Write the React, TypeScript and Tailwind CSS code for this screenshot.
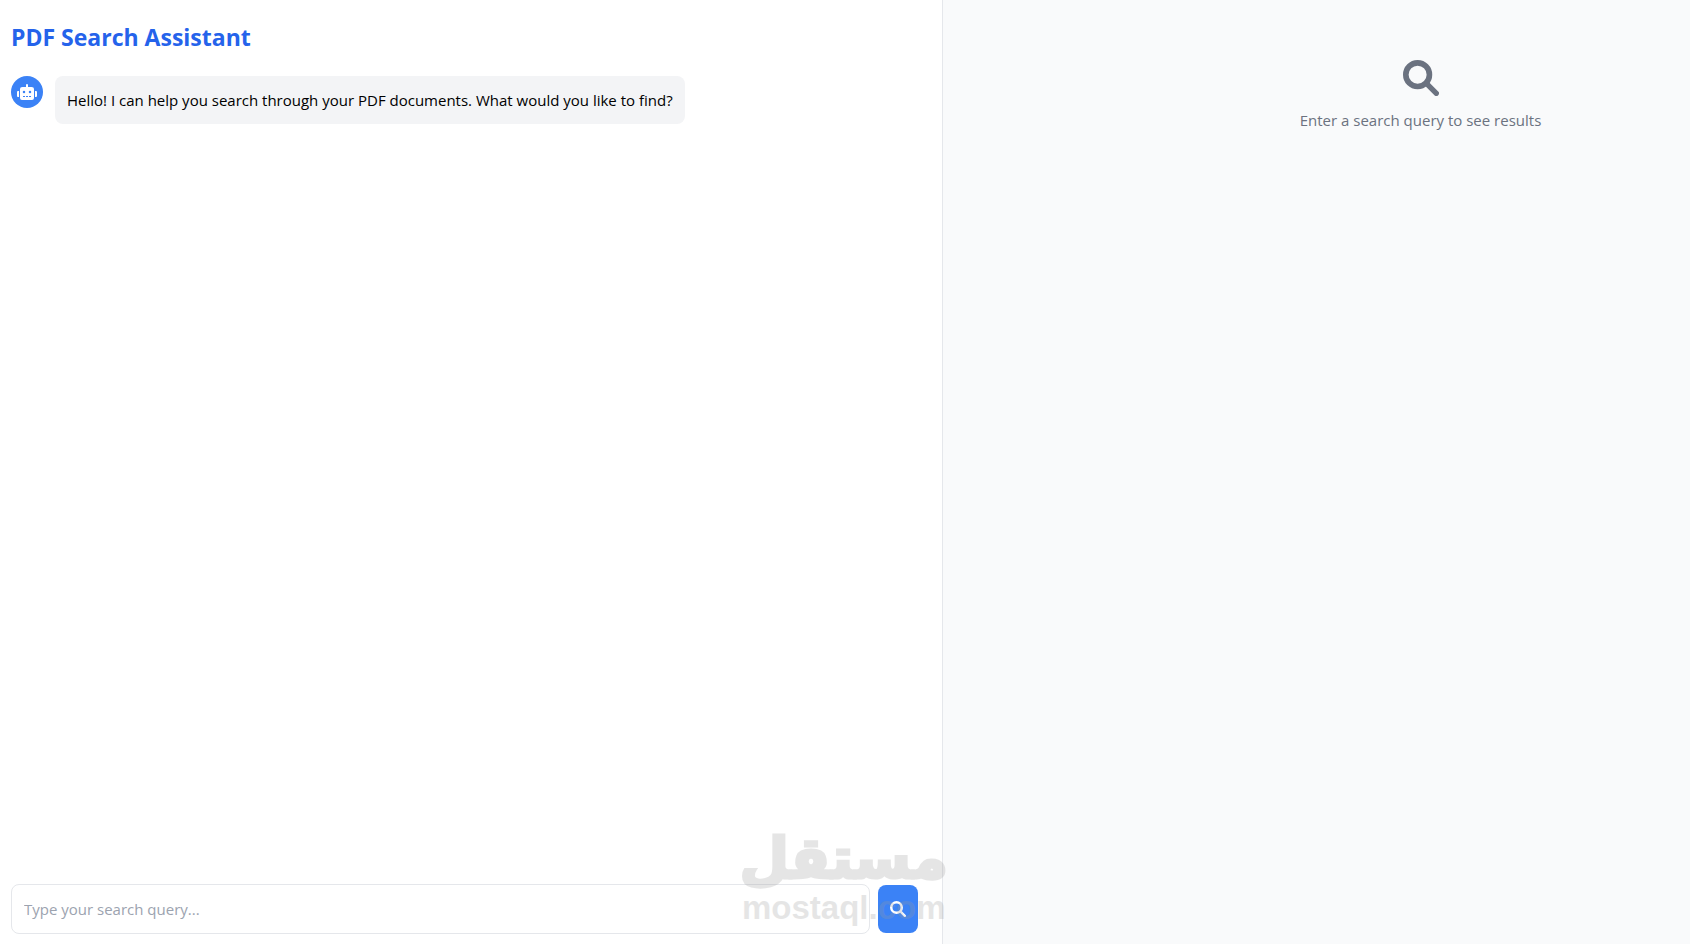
import React, { useState } from "react";
import { FaRobot } from "react-icons/fa";

interface Message {
  id: number;
  text: string;
}

const messages: Message[] = [
  {
    id: 1,
    text: "Hello! I can help you search through your PDF documents. What would you like to find?",
  },
];

const SearchIcon: React.FC<{ className?: string }> = ({ className }) => (
  <svg
    viewBox="0 0 512 512"
    fill="none"
    stroke="currentColor"
    className={className}
    aria-hidden="true"
  >
    <circle cx="208" cy="208" r="168" strokeWidth="80" />
    <path d="M336 336 474 474" strokeWidth="76" strokeLinecap="round" />
  </svg>
);

const ChatMessage: React.FC<{ message: Message }> = ({ message }) => (
  <div className="flex items-start gap-3">
    <div className="flex h-8 w-8 shrink-0 items-center justify-center rounded-full bg-[#3b82f6] text-white">
      <FaRobot className="h-4 w-5" />
    </div>
    <p className="rounded-lg bg-[#f3f4f6] p-3 text-black">{message.text}</p>
  </div>
);

const Watermark: React.FC = () => (
  <div className="pointer-events-none absolute right-0 bottom-4 flex translate-x-1.5 flex-col items-center text-[#9b9b9b] opacity-25 select-none">
    <span
      lang="ar"
      dir="rtl"
      className="font-['DejaVu_Sans'] text-[57px] leading-[60px] font-bold [-webkit-text-stroke:3px_#9b9b9b]"
    >
      مستقل
    </span>
    <span className="font-['Liberation_Sans'] text-[33px] leading-10 font-bold">
      mostaql.com
    </span>
  </div>
);

const App: React.FC = () => {
  const [query, setQuery] = useState("");

  return (
    <div className="flex min-h-screen bg-white font-['Open_Sans','Noto_Sans',sans-serif] text-[15px] leading-6">
      <main className="relative z-10 flex w-[943px] max-w-[56%] shrink-0 flex-col border-r border-[#e5e7eb] pt-[21px] pr-6 pb-[10px] pl-[11px]">
        <h1 className="mb-[23px] text-[23px] leading-8 font-bold text-[#2563eb]">
          PDF Search Assistant
        </h1>

        <div className="flex flex-1 flex-col gap-4">
          {messages.map((message) => (
            <ChatMessage key={message.id} message={message} />
          ))}
        </div>

        <form
          className="flex items-center gap-2"
          onSubmit={(e) => e.preventDefault()}
        >
          <input
            type="text"
            aria-label="Search query"
            value={query}
            onChange={(e) => setQuery(e.target.value)}
            placeholder="Type your search query..."
            className="min-w-0 flex-1 rounded-lg border border-[#e5e7eb] bg-white p-3 placeholder:text-[#9ca3af]"
          />
          <button
            type="submit"
            aria-label="Search"
            className="flex h-12 w-10 items-center justify-center rounded-lg bg-[#3b82f6] text-white"
          >
            <SearchIcon className="h-4 w-4" />
          </button>
        </form>

        <Watermark />
      </main>

      <section className="flex flex-1 flex-col items-center bg-[#f9fafb] pt-[60px] pl-52 text-[#6b7280]">
        <SearchIcon className="mb-3 h-9 w-9" />
        <p>Enter a search query to see results</p>
      </section>
    </div>
  );
};

export default App;
